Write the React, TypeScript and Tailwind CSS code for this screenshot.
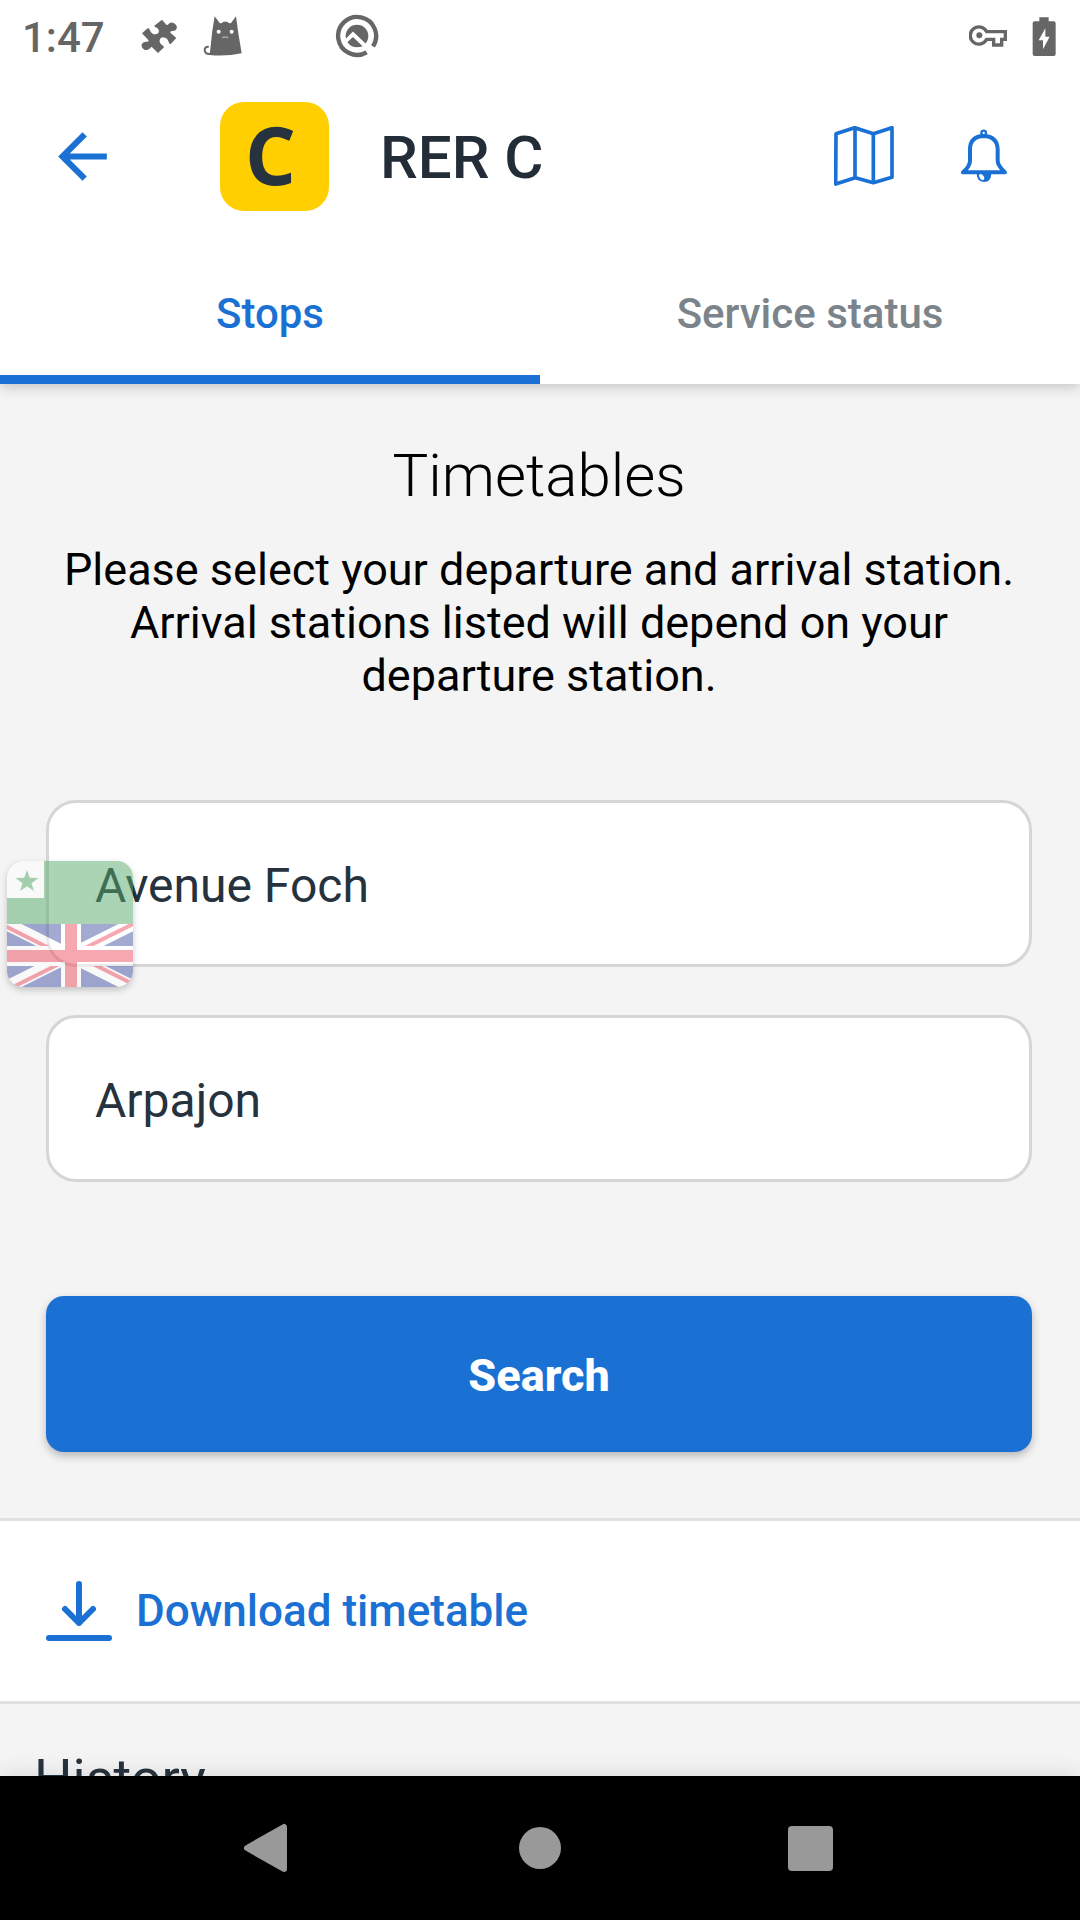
import React from "react";

function PuzzleIcon() {
  return (
    <svg className="h-[36px] w-[38px]" viewBox="424 52 114 108" fill="#666" aria-hidden="true">
      <path d="M487 57 L500 72 Q503 75 506 71 Q512 62 522 67 Q534 74 531 84 Q528 92 517 91 Q510 92 513 97 L530 112 L514 129 Q509 132 507 124 Q503 111 490 110 Q478 112 480 124 Q482 132 491 136 L493 140 L475 157 L459 141 Q455 137 452 142 Q445 151 434 147 Q424 141 426 131 Q430 122 440 123 Q449 124 446 118 L427 98 L442 84 Q448 81 450 87 Q455 101 468 101 Q480 98 477 88 Q475 81 466 79 L464 75 Z" />
    </svg>
  );
}

function CatIcon() {
  return (
    <svg className="h-[40px] w-[39px]" viewBox="612 46 117 120" aria-hidden="true">
      <path d="M647 47 L662 67 Q668 69 672 64 Q679 61 686 64 Q690 69 696 67 L711 47 L718 98 L728 158 Q680 168 632 163 L640 90 Z" fill="#666" />
      <path d="M636 160 Q616 162 617 146 Q619 138 627 138" fill="none" stroke="#666" strokeWidth="6" strokeLinecap="round" />
      <circle cx="659" cy="93" r="6" fill="#fff" />
      <circle cx="698" cy="93" r="6" fill="#fff" />
      <path d="M669 111 Q678 107 688 111" fill="none" stroke="#aaa" strokeWidth="4" />
    </svg>
  );
}

function SearchRingIcon() {
  return (
    <svg className="size-[44px]" viewBox="1008 41 132 132" aria-hidden="true">
      <path d="M1103 156 A57 57 0 1 1 1122 138" fill="none" stroke="#666" strokeWidth="13" />
      <circle cx="1074" cy="107" r="34" fill="#666" />
      <path d="M1040 124 L1062 102 L1124 161" fill="none" stroke="#fff" strokeWidth="12" />
      <path d="M1046 125 L1060 112 L1088 138 Q1064 146 1046 125 Z" fill="#666" />
    </svg>
  );
}

function KeyIcon() {
  return (
    <svg className="h-[24px] w-[39px]" viewBox="91 75 117 72" fill="none" stroke="#666" strokeWidth="10" aria-hidden="true">
      <path d="M144 98 H200 V121 H189 V138 H165 V121 H144 A26 26 0 1 1 144 98 Z" />
      <circle cx="122" cy="109" r="9" fill="#666" stroke="none" />
    </svg>
  );
}

function BatteryIcon() {
  return (
    <svg className="h-[39px] w-[24px]" viewBox="277 47 72 117" aria-hidden="true">
      <path d="M299 48 H327 V60 H342 Q348 60 348 66 V158 Q348 164 342 164 H285 Q279 164 279 158 V66 Q279 60 285 60 H299 Z" fill="#666" />
      <path d="M317 81 L297 117 H310 V144 L330 106 H317 Z" fill="#fff" />
    </svg>
  );
}

function BackIcon() {
  return (
    <svg className="size-[73px]" viewBox="0 0 24 24" fill="currentColor" aria-hidden="true">
      <path d="M20 11H7.83l5.59-5.59L12 4l-8 8 8 8 1.41-1.41L7.83 13H20v-2z" />
    </svg>
  );
}

function MapIcon() {
  return (
    <svg className="size-[60px]" viewBox="162 138 180 180" fill="none" stroke="currentColor" strokeWidth="11" strokeLinejoin="round" aria-hidden="true">
      <path d="M168 161 L224 143 L280 161 L336 143 V292 L280 308 L226 293 L167 312 Z" />
      <path d="M225 143 V293 M280 161 V308" />
    </svg>
  );
}

function BellIcon() {
  return (
    <svg className="h-[54px] w-[46px]" viewBox="543 147 138 162" fill="none" stroke="currentColor" strokeWidth="12" strokeLinejoin="round" aria-hidden="true">
      <path d="M549 277 H675 Q653 256 653 242 V207 Q651 169 611 168 Q571 169 570 207 V242 Q570 258 549 277 Z" />
      <circle cx="611" cy="159" r="7" strokeWidth="7" />
      <path d="M590 280 H634 Q634 306 612 306 Q590 305 590 280 Z" fill="currentColor" stroke="none" />
      <ellipse cx="605" cy="291" rx="6" ry="10" transform="rotate(-35 605 291)" fill="#fff" stroke="none" />
    </svg>
  );
}

function DownloadIcon() {
  return (
    <svg className="h-[60px] w-[66px]" viewBox="0 0 66 60" fill="none" stroke="currentColor" strokeWidth="6" strokeLinecap="round" strokeLinejoin="round" aria-hidden="true">
      <path d="M33 3 V42 M19 28 L33 42 L47 28 M3 57 H63" />
    </svg>
  );
}

function LanguageFlag() {
  return (
    <svg className="size-full" viewBox="0 0 126 126" aria-hidden="true">
      <rect width="126" height="63" fill="#57ab6b" />
      <rect width="37" height="37" fill="#fff" />
      <path d="M20 9 L22.800 16.800 L31.500 17.100 L24.500 22.200 L27 30 L20 25.300 L13 30 L15.500 22.200 L8.500 17.100 L17.200 16.800 Z" fill="#57ab6b" />
      <svg y="63" width="126" height="63" viewBox="0 0 126 63">
        <rect width="126" height="63" fill="#4757a7" />
        <path d="M0 0 L126 63 M126 0 L0 63" stroke="#fff" strokeWidth="13" />
        <path d="M-2 2 L48 27 M128 -1 L74 26 M128 61 L80 37 M2 65 L52 40" stroke="#ef5161" strokeWidth="4" />
        <path d="M64 0 V63 M0 32 H126" stroke="#fff" strokeWidth="20" />
        <path d="M64 0 V63 M0 32 H126" stroke="#ef5161" strokeWidth="12" />
      </svg>
    </svg>
  );
}

const field =
  "block h-[167px] w-full rounded-[30px] border-3 border-[#d6d6d6] bg-white px-[46px] pt-[4px] text-[48px] text-[#26323d] outline-none";

export default function App() {
  return (
    <div className="flex h-screen flex-col overflow-hidden bg-[#f4f4f4] font-[Roboto,sans-serif]">
      <header className="relative z-10 bg-white shadow-[0_3px_12px_rgba(0,0,0,0.2)]">
        <div className="flex h-[72px] items-center justify-between pr-[24px] pl-[22px]">
          <div className="flex items-center">
            <span className="pt-[2px] text-[42px] font-medium text-[#666]">1:47</span>
            <span className="ml-[36px] flex"><PuzzleIcon /></span>
            <span className="ml-[24px] flex"><CatIcon /></span>
            <span className="ml-[93px] flex"><SearchRingIcon /></span>
          </div>
          <div className="flex items-center gap-[24px]">
            <KeyIcon />
            <BatteryIcon />
          </div>
        </div>

        <div className="flex h-[168px] items-center pr-[73px] pl-[46px] text-[#1a71d3]">
          <button type="button" aria-label="Back"><BackIcon /></button>
          <div className="ml-[101px] flex size-[109px] items-center justify-center rounded-[24px] bg-[#ffcf01] pr-[8px] pb-[4px]">
            <span className="font-['Open_Sans',sans-serif] text-[80px] leading-none font-bold text-[#26323d]">C</span>
          </div>
          <h1 className="ml-[51px] flex-1 pt-[4px] text-[60px] leading-none font-medium text-[#222d38]">RER C</h1>
          <button type="button" aria-label="Map"><MapIcon /></button>
          <button type="button" aria-label="Notifications" className="ml-[67px]"><BellIcon /></button>
        </div>

        <div role="tablist" className="grid h-[144px] grid-cols-2 text-[42px] font-medium">
          <button type="button" role="tab" aria-selected="true" className="border-b-9 border-[#1a71d3] pt-[12px] text-[#1a71d3]">
            Stops
          </button>
          <button type="button" role="tab" aria-selected="false" className="border-b-9 border-transparent pt-[12px] text-[#7b838b]">
            Service status
          </button>
        </div>
      </header>

      <main className="min-h-0 flex-1 overflow-y-auto [scrollbar-width:none]">
        <form className="pt-[57px] pr-[48px] pb-[66px] pl-[46px]" onSubmit={(e) => e.preventDefault()}>
          <h2 className="text-center text-[60px] leading-[70px] font-light text-black">Timetables</h2>
          <p className="mt-[32px] text-center text-[45px] leading-[53px] text-black">
            Please select your departure and arrival station. Arrival stations listed will depend on your departure station.
          </p>
          <div className="relative mt-[98px]">
            <input aria-label="Departure station" className={field} defaultValue="Avenue Foch" />
            <div className="absolute top-[61px] -left-[39px] size-[126px] overflow-hidden rounded-[16px] opacity-50 shadow-[0_3px_6px_rgba(0,0,0,0.4)]">
              <LanguageFlag />
            </div>
          </div>
          <input aria-label="Arrival station" className={`mt-[48px] ${field}`} defaultValue="Arpajon" />
          <button
            type="submit"
            className="mt-[114px] block h-[156px] w-full rounded-[18px] bg-[#1a71d3] pt-[4px] text-[45px] font-extrabold text-white shadow-[0_4px_8px_rgba(0,0,0,0.25)]"
          >
            Search
          </button>
        </form>

        <div className="border-y-3 border-[#e0e1e0] bg-white px-[46px]">
          <a href="#timetable" className="flex h-[180px] items-center gap-[24px] text-[44px] font-medium text-[#1a71d3]">
            <DownloadIcon />
            Download timetable
          </a>
        </div>

        <section className="px-[34px] pt-[40px] pb-[60px]">
          <h2 className="text-[54px] leading-[70px] text-[#26323d]">History</h2>
        </section>
      </main>

      <nav aria-label="System" className="relative z-10 grid h-[144px] shrink-0 grid-cols-3 place-items-center bg-black px-[135px] shadow-[0_0_24px_rgba(0,0,0,0.12)]">
        <button type="button" aria-label="Back">
          <svg className="size-[54px]" viewBox="0 0 54 54" fill="#999" stroke="#999" strokeWidth="6" strokeLinejoin="round" aria-hidden="true">
            <path d="M4 27 L41 6 V48 Z" />
          </svg>
        </button>
        <button type="button" aria-label="Home" className="size-[42px] rounded-full bg-[#999]" />
        <button type="button" aria-label="Recent apps" className="size-[45px] rounded-[4px] bg-[#999]" />
      </nav>
    </div>
  );
}
